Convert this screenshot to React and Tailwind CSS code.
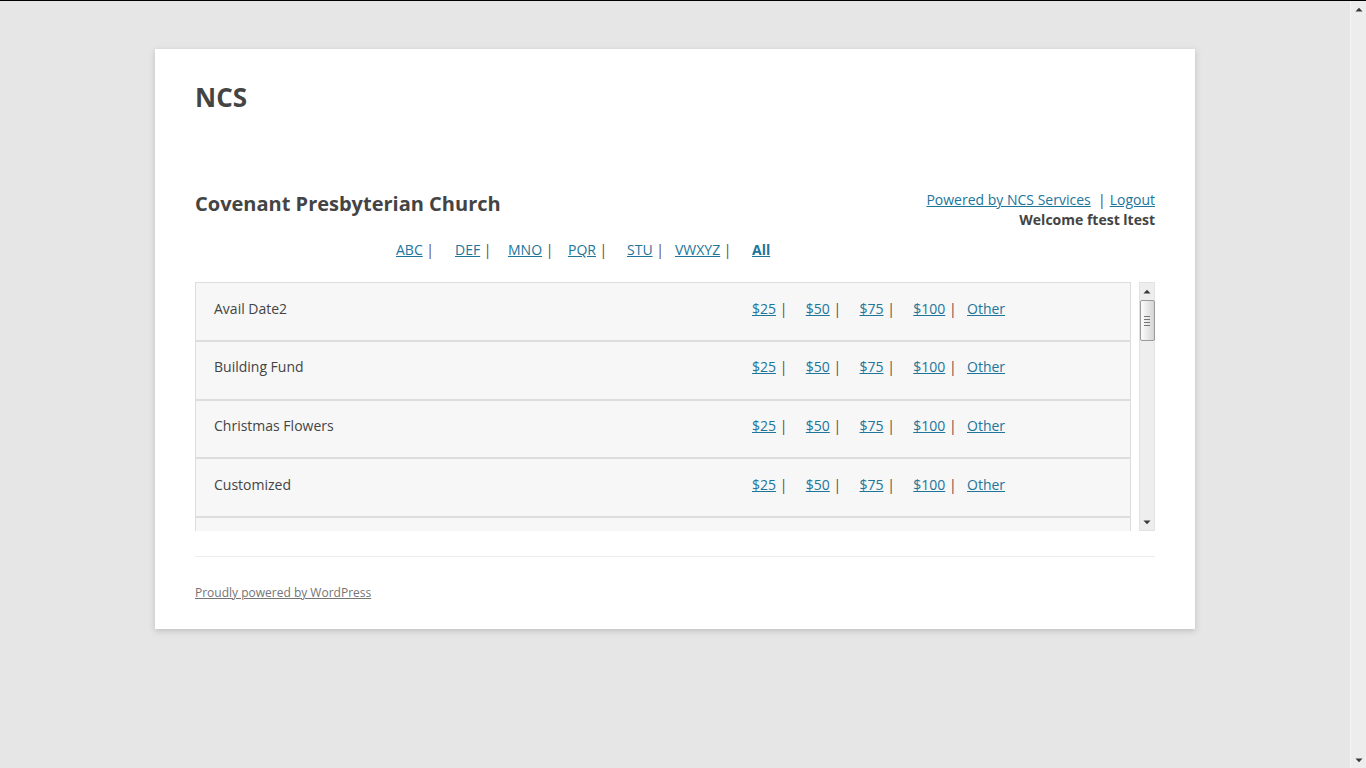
import React from "react";

const font = { fontFamily: '"Open Sans", "Liberation Sans", sans-serif' };

function UpArrow({ className }) {
  return (
    <svg width="8" height="5" viewBox="0 0 8 5" className={className}>
      <path d="M0.5 4.5 L4 0.8 L7.5 4.5 Z" fill="#3a3a3a" />
    </svg>
  );
}
function DownArrow({ className }) {
  return (
    <svg width="8" height="5" viewBox="0 0 8 5" className={className}>
      <path d="M0.5 0.5 L7.5 0.5 L4 4.2 Z" fill="#3a3a3a" />
    </svg>
  );
}

function Amounts() {
  const items = ["$25", "$50", "$75", "$100"];
  return (
    <div className="flex">
      {items.map((a) => (
        <div key={a} className="w-[53.75px] shrink-0 whitespace-nowrap">
          <a href="#" className="text-[#21759b] underline">{a}</a>
          <span className="text-[#5a4a4a]"> |</span>
        </div>
      ))}
      <div className="shrink-0">
        <a href="#" className="text-[#21759b] underline">Other</a>
      </div>
    </div>
  );
}

export default function App() {
  const letters = [
    ["ABC", 59],
    ["DEF", 53],
    ["MNO", 60],
    ["PQR", 59],
    ["STU", 48],
    ["VWXYZ", 77],
  ];
  const rows = ["Avail Date2", "Building Fund", "Christmas Flowers", "Customized"];

  return (
    <div className="h-screen flex flex-col bg-[#e6e6e6] text-[14px] text-[#444]" style={font}>
      <div className="h-px bg-black shrink-0" />
      <div className="flex flex-1 min-h-0">
        <div className="flex-1 pt-[48px]">
          <div className="mx-auto w-[1040px] bg-white px-[40px] shadow-[0_2px_6px_rgba(100,100,100,0.3)]">
            <div className="pt-[24px]">
              <h1 className="text-[26px] font-bold leading-[48px] text-[#444]">NCS</h1>
            </div>

            <div className="mt-[69px] flex justify-between items-start">
              <h2 className="text-[20px] font-bold leading-[28px] text-[#444]">Covenant Presbyterian Church</h2>
              <div className="text-right leading-[20px]">
                <div>
                  <a href="#" className="text-[#21759b] underline">Powered by NCS Services</a>
                  <span className="text-[#444]">&nbsp; |</span>
                  <span className="inline-block w-[4px]" />
                  <a href="#" className="text-[#21759b] underline">Logout</a>
                </div>
                <div className="font-bold text-[#444]">Welcome ftest ltest</div>
              </div>
            </div>

            <div className="mt-[10px] flex leading-[20px] pl-[201px]">
              {letters.map(([l, w]) => (
                <div key={l} className="shrink-0 whitespace-nowrap" style={{ width: w }}>
                  <a href="#" className="text-[#21759b] underline">{l}</a>
                  <span className="text-[#5a4a4a]"> |</span>
                </div>
              ))}
              <a href="#" className="text-[#21759b] underline font-bold">All</a>
            </div>

            <div className="mt-[22px] flex h-[249px] gap-[8px]">
              <div className="w-[936px] overflow-hidden">
                {rows.map((r) => (
                  <div
                    key={r}
                    className="h-[58.75px] border border-[#dddddd] bg-[#f7f7f7] flex items-start pt-[15.6px] leading-[20px]"
                  >
                    <div className="w-[556px] shrink-0 pl-[18px] text-[#444]">{r}</div>
                    <Amounts />
                  </div>
                ))}
                <div className="h-[58.75px] border border-[#dddddd] bg-[#f7f7f7]" />
              </div>
              <div className="w-[16px] h-full bg-[#eeeeee] border border-[#e2e2e2] flex flex-col items-center">
                <div className="h-[16px] flex items-center justify-center">
                  <UpArrow />
                </div>
                <div className="mt-[1px] w-[15px] h-[41px] rounded-[2px] border border-[#9a9a9a] bg-gradient-to-r from-[#fdfdfd] to-[#d4d4d4] flex flex-col items-center justify-center gap-[2px]">
                  <div className="w-[6px] h-px bg-[#777]" />
                  <div className="w-[6px] h-px bg-[#777]" />
                  <div className="w-[6px] h-px bg-[#777]" />
                  <div className="w-[6px] h-px bg-[#777]" />
                </div>
                <div className="flex-1" />
                <div className="h-[16px] flex items-center justify-center">
                  <DownArrow />
                </div>
              </div>
            </div>

            <div className="mt-[25px] border-t border-[#ededed] py-[24px]">
              <a href="#" className="text-[12px] leading-[24px] text-[#757575] underline block w-fit">
                Proudly powered by WordPress
              </a>
            </div>
          </div>
        </div>
        <div className="w-[16px] shrink-0 bg-[#ededed] border-l border-[#f6f6f6] flex flex-col items-center justify-between">
          <div className="h-[16px] flex items-center justify-center">
            <UpArrow />
          </div>
          <div className="h-[16px] flex items-center justify-center">
            <DownArrow />
          </div>
        </div>
      </div>
    </div>
  );
}
